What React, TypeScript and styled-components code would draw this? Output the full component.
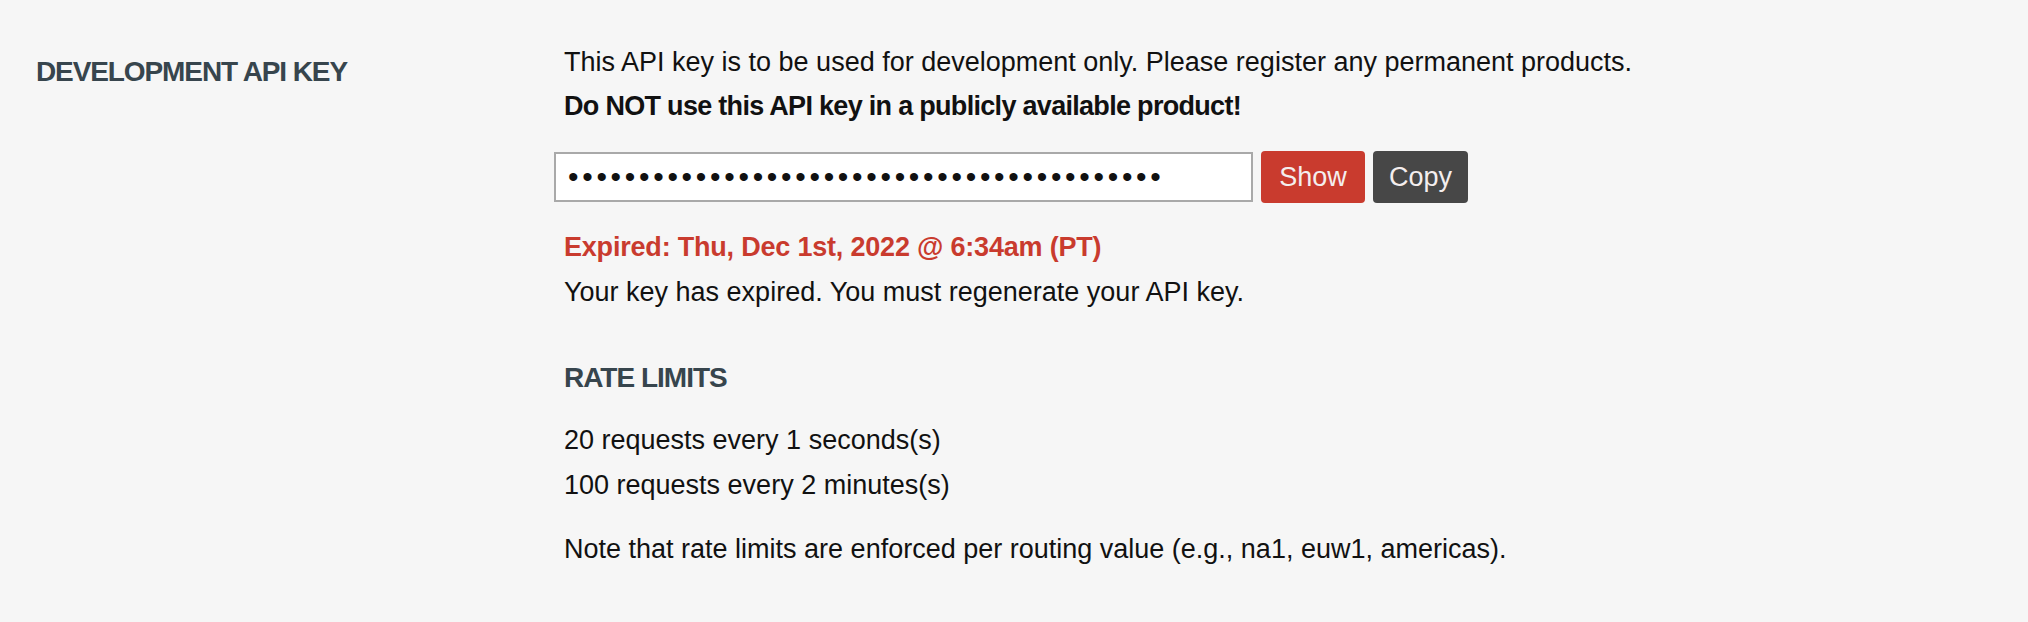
import React from 'react'
import styled, {createGlobalStyle} from 'styled-components'

const GlobalStyle = createGlobalStyle`
  html, body {
    margin: 0;
    padding: 0;
    background: #f6f6f6;
  }
  body {
    font-family: "Liberation Sans", Arial, sans-serif;
    color: #111;
  }
`

const Section = styled.section`
  display: grid;
  grid-template-columns: 528px 1fr;
  padding: 46px 36px 40px;
  min-height: 622px;
  box-sizing: border-box;
`

const Label = styled.h2`
  margin: 10px 0 0;
  font-size: 28px;
  line-height: 32px;
  font-weight: 700;
  color: #37454d;
  letter-spacing: -1.1px;
`

const Body = styled.div`
  display: flex;
  flex-direction: column;
`

const Text = styled.p<{ $bold?: boolean; $gap?: number }>`
  margin: 0 0 ${({$gap}) => ($gap ?? 12)}px;
  font-size: 27px;
  line-height: 32px;
  font-weight: ${({$bold}) => ($bold ? 700 : 400)};
  letter-spacing: ${({$bold}) => ($bold ? '-0.7px' : '0')};
`

const Expired = styled.p`
  margin: 0 0 13px;
  font-size: 27px;
  line-height: 32px;
  font-weight: 700;
  letter-spacing: -0.2px;
  color: #c93b2e;
`

const KeyRow = styled.div`
  display: flex;
  align-items: center;
  gap: 8px;
  margin: 29px 0 28px -10px;
`

const KeyInput = styled.input`
  width: 699px;
  height: 50px;
  box-sizing: border-box;
  border: 2px solid #a9a9a9;
  background: #fff;
  padding: 0 12px;
  font-family: "Liberation Sans", Arial, sans-serif;
  font-size: 30px;
  letter-spacing: 3.7px;
  color: #111;
  outline: none;
`

const Button = styled.button<{ $variant: 'red' | 'dark'; $width: number }>`
  width: ${({$width}) => $width}px;
  height: 52px;
  padding: 0;
  border: none;
  border-radius: 4px;
  background: ${({$variant}) => ($variant === 'red' ? '#c93b2e' : '#474747')};
  color: #f4eeee;
  font-family: "Liberation Sans", Arial, sans-serif;
  font-size: 27px;
  cursor: pointer;
`

const SubHeading = styled.h3`
  margin: 54px 0 30px;
  font-size: 28px;
  line-height: 32px;
  font-weight: 700;
  color: #37454d;
  letter-spacing: -1px;
`

export default function App() {
  return (
    <>
      <GlobalStyle/>
      <Section>
        <Label>DEVELOPMENT API KEY</Label>
        <Body>
          <Text>This API key is to be used for development only. Please register any permanent products.</Text>
          <Text $bold $gap={0}>Do NOT use this API key in a publicly available product!</Text>
          <KeyRow>
            <KeyInput type="password" readOnly value="RGAPI-00000000-0000-0000-0000-000000000000"/>
            <Button $variant="red" $width={104}>Show</Button>
            <Button $variant="dark" $width={95}>Copy</Button>
          </KeyRow>
          <Expired>Expired: Thu, Dec 1st, 2022 @ 6:34am (PT)</Expired>
          <Text $gap={0}>Your key has expired. You must regenerate your API key.</Text>
          <SubHeading>RATE LIMITS</SubHeading>
          <Text $gap={13}>20 requests every 1 seconds(s)</Text>
          <Text $gap={32}>100 requests every 2 minutes(s)</Text>
          <Text>Note that rate limits are enforced per routing value (e.g., na1, euw1, americas).</Text>
        </Body>
      </Section>
    </>
  )
}
